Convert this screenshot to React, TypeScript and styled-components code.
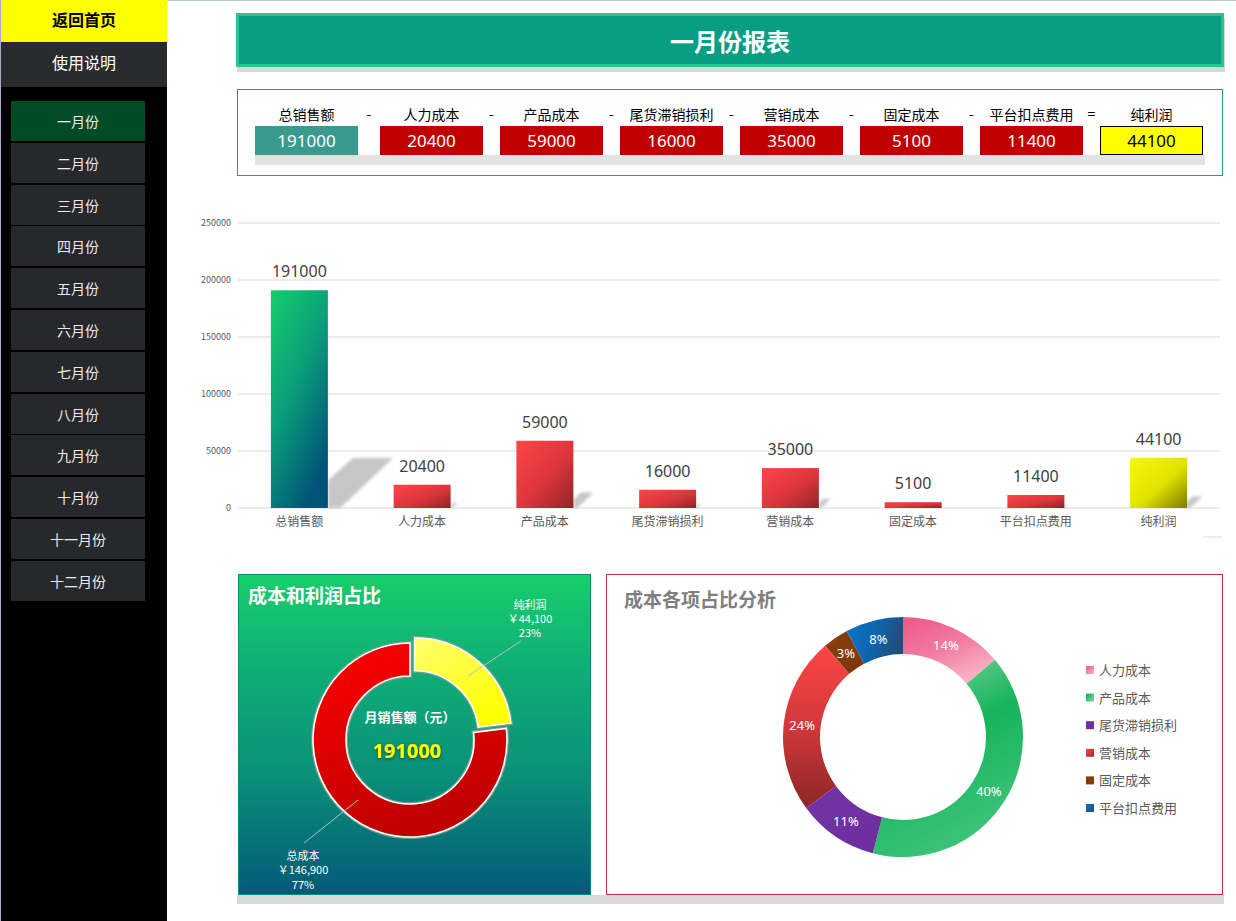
import styled, { createGlobalStyle } from "styled-components";

const Global = createGlobalStyle`
  body {
    margin: 0;
    background: #fff;
    font-family: "Noto Sans CJK SC", "Noto Sans", sans-serif;
  }
`;

const Page = styled.div`
  display: flex;
  min-height: 921px;
`;

const Sidebar = styled.nav`
  width: 167px;
  flex-shrink: 0;
  box-sizing: border-box;
  background: #000;
  border-left: 1px solid #a9a9c9;
  display: flex;
  flex-direction: column;
`;

const HomeButton = styled.div`
  height: 43px;
  box-sizing: border-box;
  padding-bottom: 4px;
  background: #ffff00;
  border-bottom: 1px solid #222;
  display: flex;
  align-items: center;
  justify-content: center;
  font-size: 16px;
  font-weight: 700;
  color: #000;
`;

const HelpButton = styled.div`
  height: 44px;
  box-sizing: border-box;
  padding-bottom: 6px;
  background: #2a2b2e;
  display: flex;
  align-items: center;
  justify-content: center;
  font-size: 16px;
  color: #fff;
`;

const MonthList = styled.div`
  display: flex;
  flex-direction: column;
  gap: 1.8px;
  padding: 14px 0 0 10px;
`;

const MonthButton = styled.div<{ $active?: boolean }>`
  width: 134px;
  height: 40px;
  background: ${p => (p.$active ? "#014c24" : "#27282b")};
  color: #ececec;
  font-size: 14px;
  display: flex;
  align-items: center;
  justify-content: center;
`;

const Main = styled.main`
  flex: 1;
  box-sizing: border-box;
  border-top: 1px solid #b9c9c4;
  padding: 12px 12px 0 69px;
  display: flex;
  flex-direction: column;
`;

const TitleBar = styled.h1`
  margin: 0;
  height: 54px;
  box-sizing: border-box;
  background: #079e84;
  border: 3px solid #2bc48e;
  box-shadow: 1px 5px 0 #d9d9d9;
  color: #fff;
  font-size: 24px;
  font-weight: 700;
  display: flex;
  align-items: center;
  justify-content: center;
`;

const FormulaBox = styled.section`
  margin: 22px 1px 0 1px;
  height: 87px;
  box-sizing: border-box;
  border: 1px solid #2a9a7c;
  padding: 15px 0 0 17px;
`;

const FormulaGrid = styled.div`
  display: grid;
  grid-template-columns: 103px 22px repeat(6, 103px 17px) 103px;
  grid-template-rows: 21px 29px 10px;
`;

const Label = styled.div`
  font-size: 14px;
  color: #000;
  text-align: center;
  line-height: 18px;
  white-space: nowrap;
`;

const Operator = styled.div`
  font-size: 14px;
  color: #000;
  text-align: center;
  line-height: 17px;
`;

const ValueBox = styled.div<{ $kind: "sales" | "cost" | "profit" }>`
  grid-row: 2;
  box-sizing: border-box;
  display: flex;
  align-items: center;
  justify-content: center;
  font-family: "Liberation Sans Narrow", "Noto Sans", sans-serif;
  font-size: 17px;
  background: ${p => (p.$kind === "sales" ? "#3a9a8e" : p.$kind === "cost" ? "#c00000" : "#ffff00")};
  color: ${p => (p.$kind === "profit" ? "#000" : "#fff")};
  border: ${p => (p.$kind === "profit" ? "1px solid #000" : "none")};
`;

const BoxShadow = styled.div`
  grid-row: 3;
  grid-column: 1 / -1;
  margin-right: -2px;
  background: #e3e3e3;
`;

const ChartSvg = styled.svg`
  display: block;
  margin: 24px 0 0 -49px;
  font-family: "Noto Sans CJK SC", "Noto Sans", sans-serif;
`;

const PanelRow = styled.div`
  display: flex;
  gap: 15px;
  margin: 29px 0 0 2px;
`;

const Panel = styled.section<{ $w: number; $variant: "green" | "white" }>`
  width: ${p => p.$w}px;
  height: 321px;
  box-sizing: border-box;
  display: grid;
  background: ${p =>
    p.$variant === "green"
      ? "linear-gradient(180deg, #18cd6c 0%, #0fae76 30%, #0a9179 62%, #035a78 100%)"
      : "#fff"};
  border: 1px solid ${p => (p.$variant === "green" ? "#0b8e6c" : "#cf2d38")};
  & > * {
    grid-area: 1 / 1;
  }
`;

const PanelTitle = styled.h2<{ $color: string; $pad: string }>`
  margin: 0;
  padding: ${p => p.$pad};
  font-size: 19px;
  font-weight: 700;
  color: ${p => p.$color};
  line-height: 24px;
  align-self: start;
  justify-self: start;
  position: relative;
  z-index: 1;
`;

const PanelSvg = styled.svg`
  display: block;
  font-family: "Noto Sans CJK SC", "Noto Sans", sans-serif;
`;

const BottomShadow = styled.div`
  margin-left: 1px;
  width: 987px;
  height: 9px;
  background: #d9d9d9;
`;

const months = ["一月份", "二月份", "三月份", "四月份", "五月份", "六月份", "七月份", "八月份", "九月份", "十月份", "十一月份", "十二月份"];

const items = [
  { name: "总销售额", value: 191000, kind: "sales" as const },
  { name: "人力成本", value: 20400, kind: "cost" as const },
  { name: "产品成本", value: 59000, kind: "cost" as const },
  { name: "尾货滞销损利", value: 16000, kind: "cost" as const },
  { name: "营销成本", value: 35000, kind: "cost" as const },
  { name: "固定成本", value: 5100, kind: "cost" as const },
  { name: "平台扣点费用", value: 11400, kind: "cost" as const },
  { name: "纯利润", value: 44100, kind: "profit" as const },
];

function pt(cx: number, cy: number, r: number, a: number) {
  const rad = (a * Math.PI) / 180;
  return [cx + r * Math.sin(rad), cy - r * Math.cos(rad)];
}

function arc(cx: number, cy: number, r0: number, r1: number, a0: number, a1: number) {
  const large = a1 - a0 > 180 ? 1 : 0;
  const [x1, y1] = pt(cx, cy, r1, a0);
  const [x2, y2] = pt(cx, cy, r1, a1);
  const [x3, y3] = pt(cx, cy, r0, a1);
  const [x4, y4] = pt(cx, cy, r0, a0);
  return `M${x1} ${y1}A${r1} ${r1} 0 ${large} 1 ${x2} ${y2}L${x3} ${y3}A${r0} ${r0} 0 ${large} 0 ${x4} ${y4}Z`;
}

function BarChart() {
  const left = 238;
  const right = 1220;
  const base = 508;
  const scale = 285 / 250000;
  const step = (right - left) / 8;
  const ticks = [0, 50000, 100000, 150000, 200000, 250000];
  return (
    <ChartSvg width={1037} height={345} viewBox="187 200 1037 345">
      <defs>
        <linearGradient id="gGreen" x1="0" y1="0" x2="0.6" y2="1">
          <stop offset="0" stopColor="#17cd6b" />
          <stop offset="0.5" stopColor="#0a9f7a" />
          <stop offset="1" stopColor="#015477" />
        </linearGradient>
        <linearGradient id="gRed" x1="0" y1="0" x2="1" y2="1">
          <stop offset="0" stopColor="#ff4449" />
          <stop offset="0.55" stopColor="#db363b" />
          <stop offset="1" stopColor="#8e2527" />
        </linearGradient>
        <linearGradient id="gYellow" x1="0" y1="0" x2="1" y2="1">
          <stop offset="0" stopColor="#f7f70a" />
          <stop offset="0.55" stopColor="#e2e200" />
          <stop offset="1" stopColor="#7a7a00" />
        </linearGradient>
        <filter id="blur" x="-20%" y="-20%" width="140%" height="140%">
          <feGaussianBlur stdDeviation="1.6" />
        </filter>
      </defs>
      {ticks.map(t => {
        const y = base - t * scale;
        return (
          <g key={t}>
            <line x1={left} x2={right} y1={y} y2={y} stroke="#d9d9d9" strokeWidth={1} />
            <text x={231} y={y + 3} fontSize={9} fill="#595959" textAnchor="end">
              {t}
            </text>
          </g>
        );
      })}
      {items.map((it, i) => {
        const cx = left + step * (i + 0.5);
        const h = it.value * scale;
        const x0 = cx - 28.5;
        const xr = cx + 28.5;
        const top = base - h;
        const s = h * 0.23;
        const fill = it.kind === "sales" ? "url(#gGreen)" : it.kind === "cost" ? "url(#gRed)" : "url(#gYellow)";
        return (
          <g key={it.name}>
            <polygon
              points={`${xr},${base} ${xr},${base - s * 0.55} ${xr + s * 0.5},${base - s} ${xr + s * 1.3},${base - s} ${xr + s * 0.25},${base}`}
              fill="#bdbdbd"
              opacity={0.85}
              filter="url(#blur)"
            />
            <rect x={x0} y={top} width={57} height={h} fill={fill} />
            <text x={cx} y={top - 13} fontSize={16} fill="#404040" textAnchor="middle" fontFamily="Noto Sans, sans-serif">
              {it.value}
            </text>
            <text x={cx} y={526} fontSize={12} fill="#595959" textAnchor="middle">
              {it.name}
            </text>
          </g>
        );
      })}
      <line x1={1203} x2={1222} y1={537} y2={537} stroke="#d9d9d9" />
    </ChartSvg>
  );
}

function ProfitDonut() {
  const cx = 410;
  const cy = 740;
  const r0 = 64;
  const r1 = 97;
  const split = (44100 / 191000) * 360;
  const [dx, dy] = pt(0, 0, 7, split / 2);
  return (
    <Panel $w={353} $variant="green">
      <PanelTitle $color="#fff" $pad="8px 0 0 9px">成本和利润占比</PanelTitle>
      <PanelSvg width={351} height={319} viewBox="239 575 351 319">
        <defs>
          <linearGradient id="pRed" x1="0" y1="0" x2="0.3" y2="1">
            <stop offset="0" stopColor="#ff0000" />
            <stop offset="1" stopColor="#c00000" />
          </linearGradient>
          <linearGradient id="pYellow" x1="0" y1="0" x2="0.6" y2="1">
            <stop offset="0" stopColor="#ffff70" />
            <stop offset="1" stopColor="#ffff00" />
          </linearGradient>
          <filter id="glow" x="-30%" y="-50%" width="160%" height="200%">
            <feDropShadow dx="0" dy="1" stdDeviation="1.5" floodColor="#003a20" floodOpacity="0.9" />
          </filter>
        </defs>
        <path d={arc(cx, cy, r0, r1, split, 360)} fill="url(#pRed)" stroke="#6a9f8c" strokeWidth={4} />
        <path d={arc(cx, cy, r0, r1, split, 360)} fill="url(#pRed)" stroke="#fff" strokeWidth={1.6} />
        <g transform={`translate(${dx} ${dy})`}>
          <path d={arc(cx, cy, r0, r1, 0, split)} fill="url(#pYellow)" stroke="#6a9f8c" strokeWidth={4} />
          <path d={arc(cx, cy, r0, r1, 0, split)} fill="url(#pYellow)" stroke="#fff" strokeWidth={1.6} />
        </g>
        <text x={cx} y={722} fontSize={13} fontWeight={700} fill="#fff" textAnchor="middle">
          月销售额（元）
        </text>
        <text x={407} y={758} fontSize={20} fontWeight={700} fill="#ffff00" textAnchor="middle" filter="url(#glow)" fontFamily="Noto Sans, sans-serif">
          191000
        </text>
        <line x1={468} y1={676} x2={521} y2={641} stroke="#a9c9bf" strokeWidth={1} />
        <line x1={358} y1={800} x2={304} y2={843} stroke="#a9c9bf" strokeWidth={1} />
        <g fill="#fff" fontSize={11} textAnchor="middle">
          <text x={530} y={609}>纯利润</text>
          <text x={530} y={623}>￥44,100</text>
          <text x={530} y={637}>23%</text>
          <text x={303} y={860}>总成本</text>
          <text x={303} y={874}>￥146,900</text>
          <text x={303} y={889}>77%</text>
        </g>
      </PanelSvg>
    </Panel>
  );
}

const costs = [
  { name: "人力成本", value: 20400, grad: "cPink", legend: ["#ef5b8e", "#f9b3c9"] },
  { name: "产品成本", value: 59000, grad: "cGreen", legend: ["#00b050", "#8fd8b0"] },
  { name: "尾货滞销损利", value: 16000, grad: "cPurple", legend: ["#7030a0", "#7030a0"] },
  { name: "营销成本", value: 35000, grad: "cRed", legend: ["#ff4444", "#a02c2c"] },
  { name: "固定成本", value: 5100, grad: "cBrown", legend: ["#843c0c", "#843c0c"] },
  { name: "平台扣点费用", value: 11400, grad: "cBlue", legend: ["#0a72c8", "#1f4e79"] },
];

function CostDonut() {
  const cx = 903;
  const cy = 737;
  const r0 = 83;
  const r1 = 120;
  const total = costs.reduce((s, c) => s + c.value, 0);
  let acc = 0;
  const segs = costs.map(c => {
    const a0 = (acc / total) * 360;
    acc += c.value;
    const a1 = (acc / total) * 360;
    return { ...c, a0, a1, pct: Math.round((c.value / total) * 100) };
  });
  return (
    <Panel $w={617} $variant="white">
      <PanelTitle $color="#7f7f7f" $pad="12px 0 0 17px">成本各项占比分析</PanelTitle>
      <PanelSvg width={615} height={319} viewBox="607 575 615 319">
        <defs>
          <linearGradient id="cPink" x1="0.2" y1="0" x2="0.8" y2="1">
            <stop offset="0" stopColor="#ef5b8e" />
            <stop offset="0.45" stopColor="#f27ba2" />
            <stop offset="1" stopColor="#fbbdd0" />
          </linearGradient>
          <linearGradient id="cGreen" x1="0" y1="0" x2="0.4" y2="1">
            <stop offset="0" stopColor="#9adcb7" />
            <stop offset="0.5" stopColor="#16b45a" />
            <stop offset="1" stopColor="#3cc27a" />
          </linearGradient>
          <linearGradient id="cPurple" x1="0" y1="0" x2="1" y2="1">
            <stop offset="0" stopColor="#7434a6" />
            <stop offset="1" stopColor="#6c2e9c" />
          </linearGradient>
          <linearGradient id="cRed" x1="0" y1="0" x2="0" y2="1">
            <stop offset="0" stopColor="#ff4545" />
            <stop offset="0.5" stopColor="#d0383b" />
            <stop offset="1" stopColor="#8c2727" />
          </linearGradient>
          <linearGradient id="cBrown" x1="0" y1="0" x2="1" y2="1">
            <stop offset="0" stopColor="#8a3f0d" />
            <stop offset="1" stopColor="#7a360a" />
          </linearGradient>
          <linearGradient id="cBlue" x1="0" y1="0" x2="1" y2="0.3">
            <stop offset="0" stopColor="#0b75d0" />
            <stop offset="0.6" stopColor="#0f64aa" />
            <stop offset="1" stopColor="#1f4e79" />
          </linearGradient>
          {costs.map(c => (
            <linearGradient key={c.grad} id={`${c.grad}L`} x1="0" y1="0" x2="1" y2="1">
              <stop offset="0" stopColor={c.legend[0]} />
              <stop offset="1" stopColor={c.legend[1]} />
            </linearGradient>
          ))}
        </defs>
        {segs.map(s => (
          <path key={s.name} d={arc(cx, cy, r0, r1, s.a0, s.a1)} fill={`url(#${s.grad})`} />
        ))}
        {segs.map(s => {
          const [x, y] = pt(cx, cy, (r0 + r1) / 2, (s.a0 + s.a1) / 2);
          return (
            <text key={s.name} x={x} y={y + 5} fontSize={13} fill="#fff" textAnchor="middle" fontFamily="Noto Sans, sans-serif">
              {s.pct}%
            </text>
          );
        })}
        {costs.map((c, i) => {
          const y = 670 + i * 27.6;
          return (
            <g key={c.name}>
              <rect x={1086} y={y - 4} width={8} height={8} fill={`url(#${c.grad}L)`} />
              <text x={1099} y={y + 5} fontSize={13} fill="#595959">
                {c.name}
              </text>
            </g>
          );
        })}
      </PanelSvg>
    </Panel>
  );
}

export default function App() {
  return (
    <>
      <Global />
      <Page>
        <Sidebar>
          <HomeButton>返回首页</HomeButton>
          <HelpButton>使用说明</HelpButton>
          <MonthList>
            {months.map((m, i) => (
              <MonthButton key={m} $active={i === 0}>
                {m}
              </MonthButton>
            ))}
          </MonthList>
        </Sidebar>
        <Main>
          <TitleBar>一月份报表</TitleBar>
          <FormulaBox>
            <FormulaGrid>
              {items.map((it, i) => (
                <Label key={it.name} style={{ gridColumn: i * 2 + 1, gridRow: 1 }}>
                  {it.name}
                </Label>
              ))}
              {items.slice(1).map((it, i) => (
                <Operator key={it.name} style={{ gridColumn: i * 2 + 2, gridRow: 1 }}>
                  {it.kind === "profit" ? "=" : "-"}
                </Operator>
              ))}
              {items.map((it, i) => (
                <ValueBox key={it.name} $kind={it.kind} style={{ gridColumn: i * 2 + 1 }}>
                  {it.value}
                </ValueBox>
              ))}
              <BoxShadow />
            </FormulaGrid>
          </FormulaBox>
          <BarChart />
          <PanelRow>
            <ProfitDonut />
            <CostDonut />
          </PanelRow>
          <BottomShadow />
        </Main>
      </Page>
    </>
  );
}
